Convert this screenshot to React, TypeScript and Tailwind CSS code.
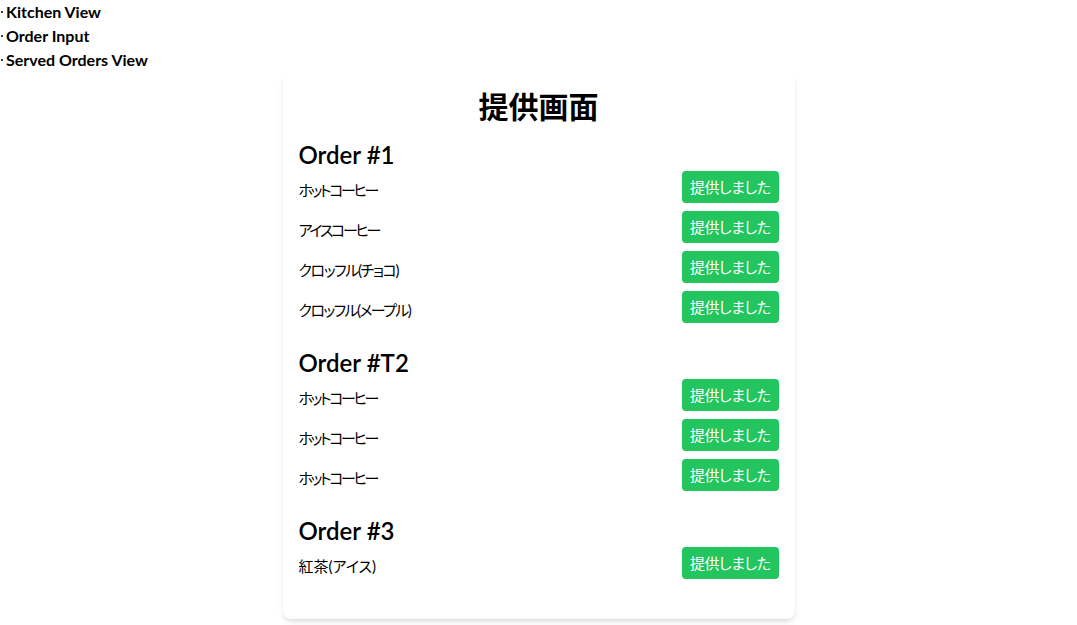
import React from "react";

type Item = { name: string; cls: string };

const hot: Item = { name: "ホットコーヒー", cls: "tracking-[-2.4px]" };
const orders: { id: string; items: Item[] }[] = [
  {
    id: "1",
    items: [
      hot,
      { name: "アイスコーヒー", cls: "tracking-[-2.3px]" },
      { name: "クロッフル(チョコ)", cls: "tracking-[-1.4px]" },
      { name: "クロッフル(メープル)", cls: "tracking-[-1.6px]" },
    ],
  },
  { id: "T2", items: [hot, hot, hot] },
  { id: "3", items: [{ name: "紅茶(アイス)", cls: "tracking-normal" }] },
];

const font = "font-['Lato','Noto_Sans_CJK_JP',sans-serif] [font-feature-settings:'palt']";

export default function App() {
  return (
    <div className={`${font} text-black bg-white min-h-[625px]`}>
      <ul className="font-bold text-base leading-6">
        {["Kitchen View", "Order Input", "Served Orders View"].map((t) => (
          <li key={t} className="flex items-center">
            <span className="ml-[1px] mr-[3px] w-[2px] h-[2px] bg-black rounded-full" />
            <span>{t}</span>
          </li>
        ))}
      </ul>
      <div className="mx-auto max-w-lg bg-white rounded-lg shadow-md p-4">
        <h1 className="text-3xl font-bold text-center mb-[15px]">提供画面</h1>
        {orders.map((o) => (
          <div key={o.id} className="mb-6">
            <h2 className="text-2xl font-semibold leading-8">Order #{o.id}</h2>
            <ul className="space-y-2">
              {o.items.map((it, i) => (
                <li key={i} className="flex items-center justify-between h-8">
                  <span className={`text-[15px] mt-[6px] ${it.cls}`}>{it.name}</span>
                  <button className="bg-[#22c55e] text-white rounded px-2 h-8 text-[15px] tracking-[-0.5px]">
                    提供しました
                  </button>
                </li>
              ))}
            </ul>
          </div>
        ))}
      </div>
    </div>
  );
}
